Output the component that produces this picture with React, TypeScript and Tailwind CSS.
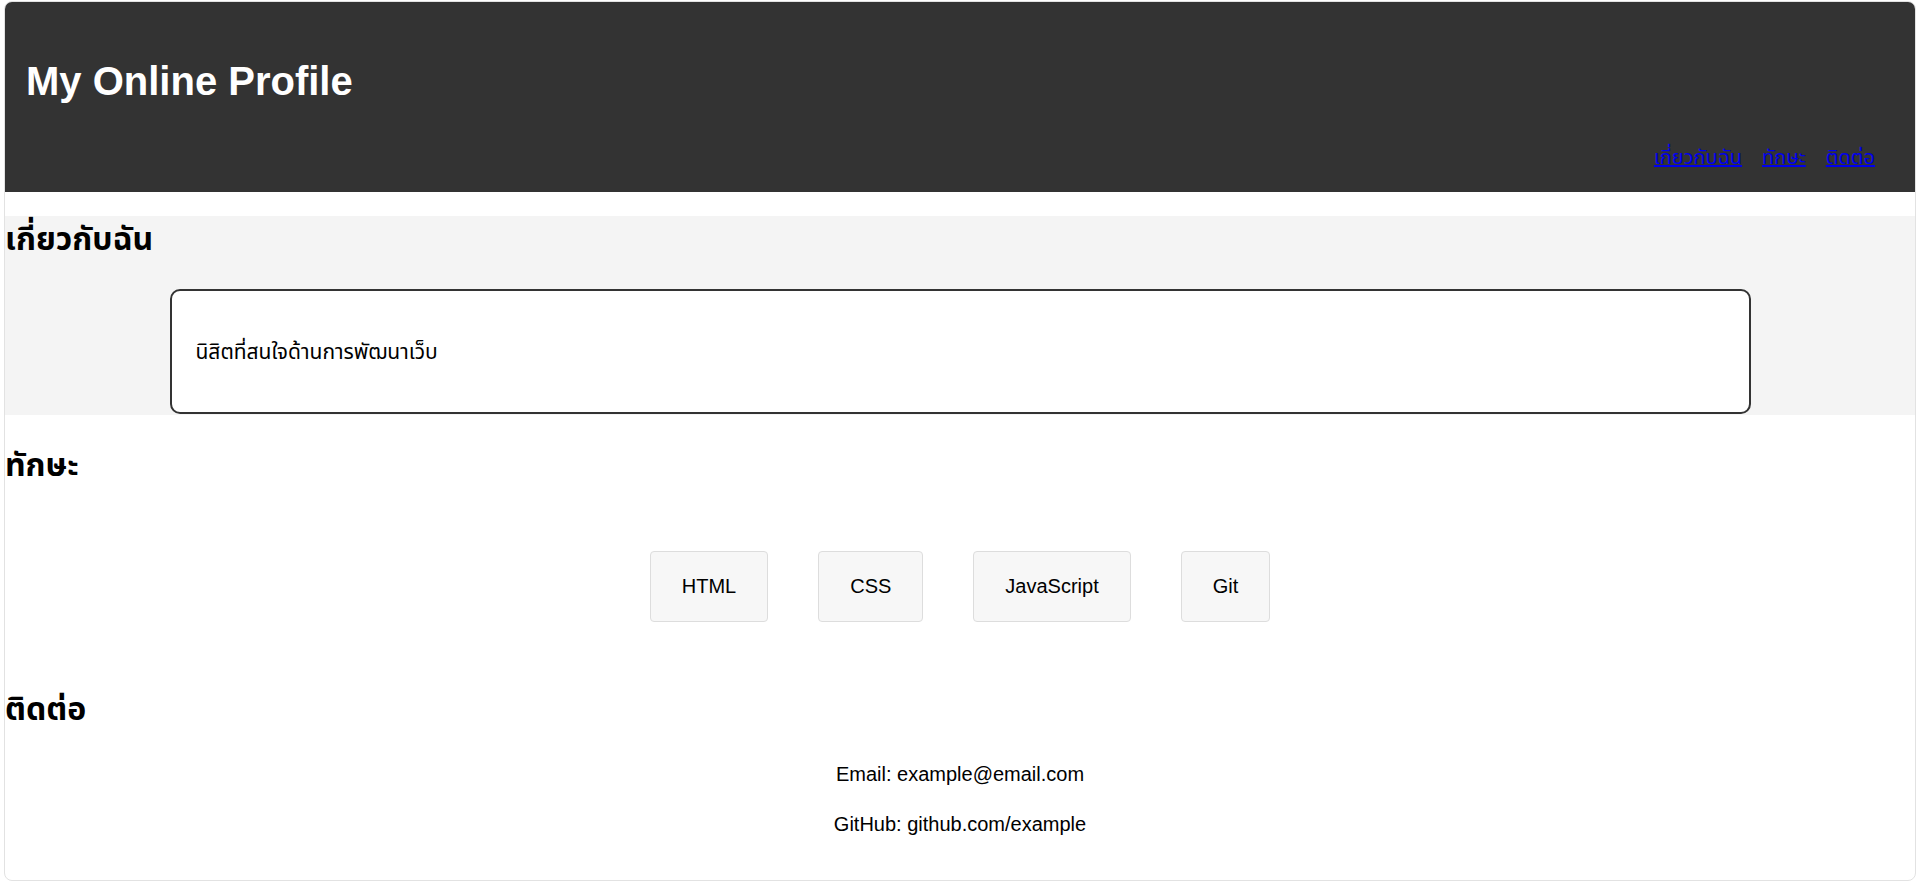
import React from "react";

const font = {
  fontFamily:
    '"Liberation Sans", Arial, "Noto Sans Thai", Tahoma, Loma, Garuda, "Noto Sans", sans-serif',
};

const skills = ["HTML", "CSS", "JavaScript", "Git"];

export default function App() {
  return (
    <div className="bg-white pt-[1px] pl-[4px]" style={font}>
      <div className="h-[880px] w-[1912px] overflow-hidden rounded-lg border border-[#e2e2e2] bg-white text-black">
        <header className="flex h-[190px] flex-col bg-[#333333] text-white">
          <h1 className="ml-[21px] mt-[56px] text-[40px] font-bold leading-[46px]">
            My Online Profile
          </h1>
          <nav className="mr-[40px] mt-[40px] flex justify-end gap-[20px] text-[20px] leading-[26px]">
            <a href="#about" className="text-[#0000ee] underline">
              เกี่ยวกับฉัน
            </a>
            <a href="#skills" className="text-[#0000ee] underline">
              ทักษะ
            </a>
            <a href="#contact" className="text-[#0000ee] underline">
              ติดต่อ
            </a>
          </nav>
        </header>

        <section id="about" className="mt-[24px] flex flex-col bg-[#f4f4f4] pb-[1px]">
          <h2 className="mt-[3px] text-[32px] font-bold leading-[40px]">เกี่ยวกับฉัน</h2>
          <div className="mx-auto mt-[30px] flex h-[125px] w-[1581px] items-center rounded-[10px] border-2 border-[#333333] bg-white pl-[24px]">
            <p className="text-[21px] leading-[26px]">นิสิตที่สนใจด้านการพัฒนาเว็บ</p>
          </div>
        </section>

        <section id="skills" className="flex flex-col">
          <h2 className="mt-[30px] text-[32px] font-bold leading-[40px]">ทักษะ</h2>
          <div className="mt-[66px] flex justify-center gap-[50px]">
            {skills.map((s) => (
              <div
                key={s}
                className="flex h-[71px] items-center justify-center rounded-[4px] border border-[#dddddd] bg-[#f7f7f7] px-[31px]"
              >
                <span className="whitespace-nowrap text-[20px] leading-[23px]">{s}</span>
              </div>
            ))}
          </div>
        </section>

        <section id="contact" className="flex flex-col">
          <h2 className="mt-[67px] text-[32px] font-bold leading-[40px]">ติดต่อ</h2>
          <div className="mt-[30px] flex flex-col items-center text-[20px] leading-[30px]">
            <p>Email: example@email.com</p>
            <p className="mt-[20px]">GitHub: github.com/example</p>
          </div>
        </section>
      </div>
    </div>
  );
}
